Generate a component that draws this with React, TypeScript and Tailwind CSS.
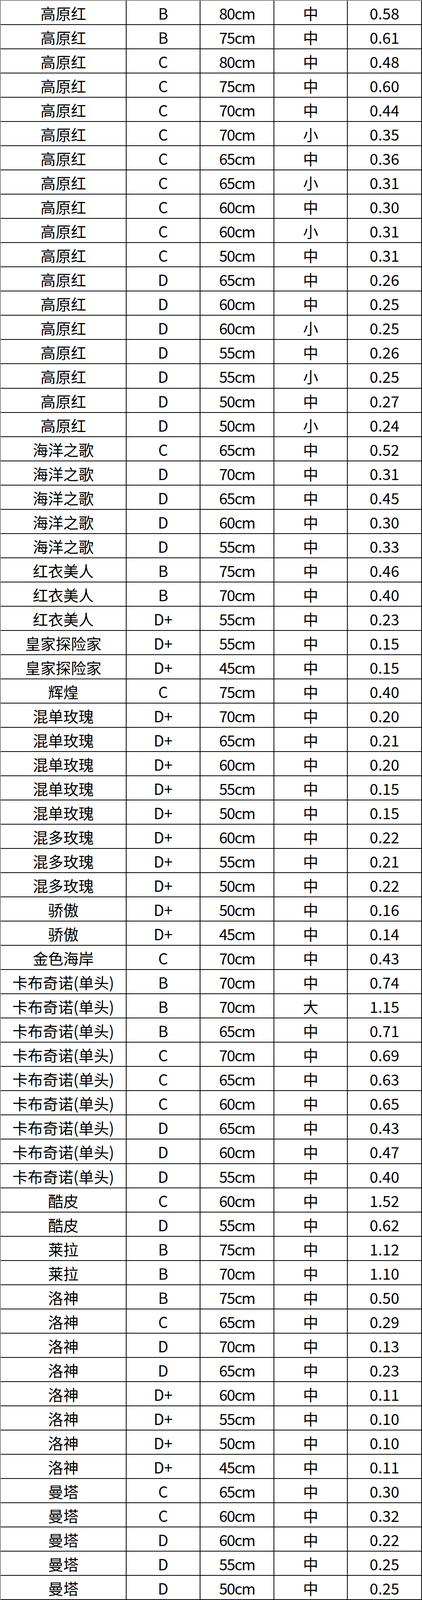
const rows: [string, string, string, string, string][] = [
  ["高原红", "B", "80cm", "中", "0.58"],
  ["高原红", "B", "75cm", "中", "0.61"],
  ["高原红", "C", "80cm", "中", "0.48"],
  ["高原红", "C", "75cm", "中", "0.60"],
  ["高原红", "C", "70cm", "中", "0.44"],
  ["高原红", "C", "70cm", "小", "0.35"],
  ["高原红", "C", "65cm", "中", "0.36"],
  ["高原红", "C", "65cm", "小", "0.31"],
  ["高原红", "C", "60cm", "中", "0.30"],
  ["高原红", "C", "60cm", "小", "0.31"],
  ["高原红", "C", "50cm", "中", "0.31"],
  ["高原红", "D", "65cm", "中", "0.26"],
  ["高原红", "D", "60cm", "中", "0.25"],
  ["高原红", "D", "60cm", "小", "0.25"],
  ["高原红", "D", "55cm", "中", "0.26"],
  ["高原红", "D", "55cm", "小", "0.25"],
  ["高原红", "D", "50cm", "中", "0.27"],
  ["高原红", "D", "50cm", "小", "0.24"],
  ["海洋之歌", "C", "65cm", "中", "0.52"],
  ["海洋之歌", "D", "70cm", "中", "0.31"],
  ["海洋之歌", "D", "65cm", "中", "0.45"],
  ["海洋之歌", "D", "60cm", "中", "0.30"],
  ["海洋之歌", "D", "55cm", "中", "0.33"],
  ["红衣美人", "B", "75cm", "中", "0.46"],
  ["红衣美人", "B", "70cm", "中", "0.40"],
  ["红衣美人", "D+", "55cm", "中", "0.23"],
  ["皇家探险家", "D+", "55cm", "中", "0.15"],
  ["皇家探险家", "D+", "45cm", "中", "0.15"],
  ["辉煌", "C", "75cm", "中", "0.40"],
  ["混单玫瑰", "D+", "70cm", "中", "0.20"],
  ["混单玫瑰", "D+", "65cm", "中", "0.21"],
  ["混单玫瑰", "D+", "60cm", "中", "0.20"],
  ["混单玫瑰", "D+", "55cm", "中", "0.15"],
  ["混单玫瑰", "D+", "50cm", "中", "0.15"],
  ["混多玫瑰", "D+", "60cm", "中", "0.22"],
  ["混多玫瑰", "D+", "55cm", "中", "0.21"],
  ["混多玫瑰", "D+", "50cm", "中", "0.22"],
  ["骄傲", "D+", "50cm", "中", "0.16"],
  ["骄傲", "D+", "45cm", "中", "0.14"],
  ["金色海岸", "C", "70cm", "中", "0.43"],
  ["卡布奇诺(单头)", "B", "70cm", "中", "0.74"],
  ["卡布奇诺(单头)", "B", "70cm", "大", "1.15"],
  ["卡布奇诺(单头)", "B", "65cm", "中", "0.71"],
  ["卡布奇诺(单头)", "C", "70cm", "中", "0.69"],
  ["卡布奇诺(单头)", "C", "65cm", "中", "0.63"],
  ["卡布奇诺(单头)", "C", "60cm", "中", "0.65"],
  ["卡布奇诺(单头)", "D", "65cm", "中", "0.43"],
  ["卡布奇诺(单头)", "D", "60cm", "中", "0.47"],
  ["卡布奇诺(单头)", "D", "55cm", "中", "0.40"],
  ["酷皮", "C", "60cm", "中", "1.52"],
  ["酷皮", "D", "55cm", "中", "0.62"],
  ["莱拉", "B", "75cm", "中", "1.12"],
  ["莱拉", "B", "70cm", "中", "1.10"],
  ["洛神", "B", "75cm", "中", "0.50"],
  ["洛神", "C", "65cm", "中", "0.29"],
  ["洛神", "D", "70cm", "中", "0.13"],
  ["洛神", "D", "65cm", "中", "0.23"],
  ["洛神", "D+", "60cm", "中", "0.11"],
  ["洛神", "D+", "55cm", "中", "0.10"],
  ["洛神", "D+", "50cm", "中", "0.10"],
  ["洛神", "D+", "45cm", "中", "0.11"],
  ["曼塔", "C", "65cm", "中", "0.30"],
  ["曼塔", "C", "60cm", "中", "0.32"],
  ["曼塔", "D", "60cm", "中", "0.22"],
  ["曼塔", "D", "55cm", "中", "0.25"],
  ["曼塔", "D", "50cm", "中", "0.25"],
];

// cm column sits a bit tighter in the original (narrow latin glyphs)
const cellCls = ["", "", "tracking-[-2px]", "", ""];

export default function App() {
  // rows share the window height evenly, like the sheet export
  return (
    <div className="flex h-screen w-[1080px] flex-col overflow-hidden border-t-2 border-l-2 border-[#8a8a8a] bg-white font-['Noto_Sans_CJK_SC',sans-serif] text-[39px] leading-none text-black">
      {rows.map((r, i) => (
        <div key={i} className="grid min-h-0 flex-1 basis-0 grid-cols-[322px_189px_189px_188px_190px]">
          {r.map((cell, j) => (
            <div
              key={j}
              className={`flex items-center justify-center whitespace-nowrap border-r-2 border-b-2 border-black pt-[3px] ${cellCls[j]}`}
            >
              {cell}
            </div>
          ))}
        </div>
      ))}
    </div>
  );
}
